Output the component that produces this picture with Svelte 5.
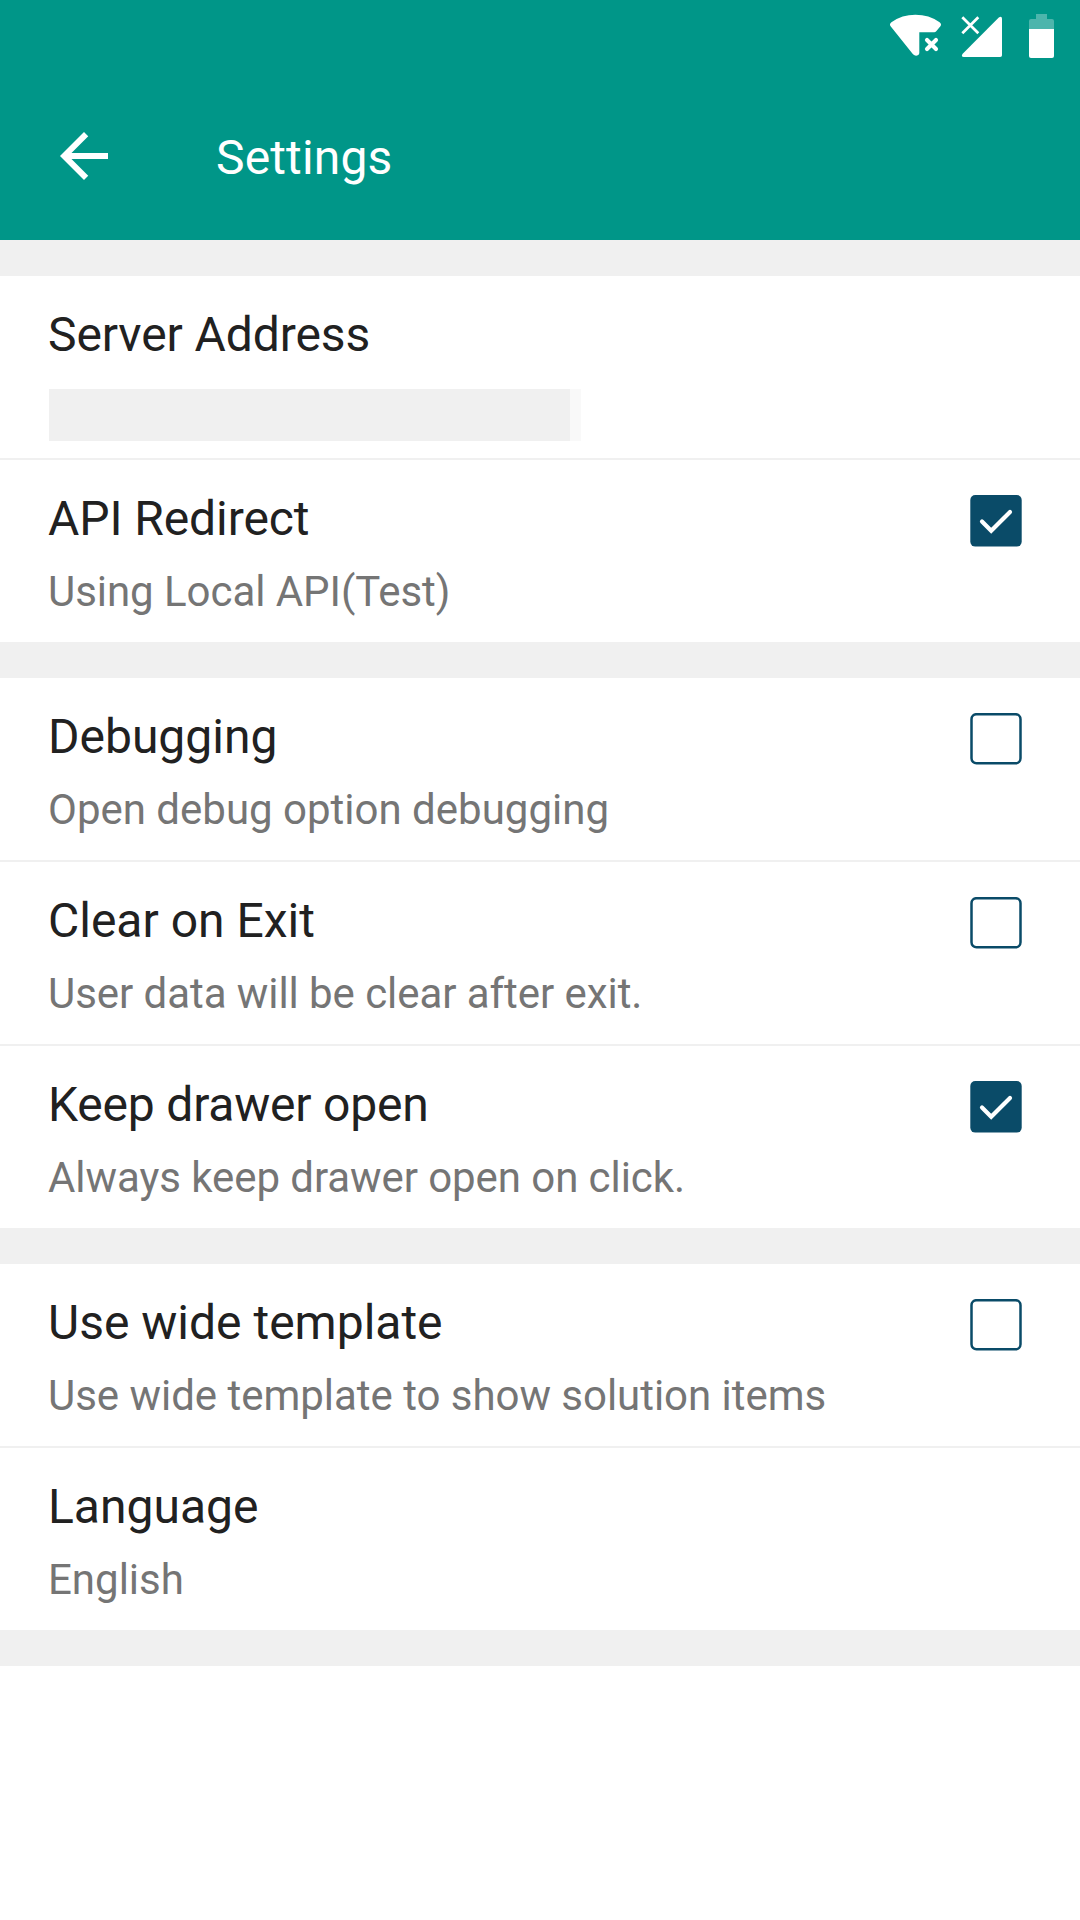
<script>
  // "fit" and "detailFit" are small tracking corrections, in pixels per letter.
  const groups = [
    [
      { title: 'Server Address', fit: -0.09, hidden: true },
      { title: 'API Redirect', fit: -0.08, detail: 'Using Local API(Test)', detailFit: -0.05, checked: true },
    ],
    [
      { title: 'Debugging', detail: 'Open debug option debugging', checked: false },
      { title: 'Clear on Exit', detail: 'User data will be clear after exit.', detailFit: -0.06, checked: false },
      { title: 'Keep drawer open', fit: -0.2, detail: 'Always keep drawer open on click.', detailFit: -0.07, checked: true },
    ],
    [
      { title: 'Use wide template', detail: 'Use wide template to show solution items', detailFit: -0.03, checked: false },
      { title: 'Language', detail: 'English' },
    ],
  ];
</script>

<div class="screen">
  <header>
    <div class="status">
      <svg width="210" height="72" viewBox="0 0 210 72" fill="#fff">
        <path d="M20.6 26.3Q19 24 21.4 22.2Q32 14.8 45.4 14.8Q59 14.8 69.6 22.2Q72 24 70.4 26.3L66 31.6Q65.3 32.3 64.3 32.3H49.3V53Q49.2 54.3 48.2 55Q45.5 56.6 43 54.3Z" />
        <path d="M57 40L66 49M66 40L57 49" fill="none" stroke="#fff" stroke-width="4.1" stroke-linecap="round" />
        <path d="M128.8 17.6Q131.8 15.6 132 18.8V55.2Q132 57 130.2 57H93.8Q90.6 56.7 92.7 53.7Z" />
        <path d="M92.3 17.3L108.3 33.3M108.3 17.3L92.3 33.3" fill="none" stroke="#fff" stroke-width="2.7" />
        <path d="M159 29V21Q159 19 161 19H166V14H177V19H182Q184 19 184 21V29Z" opacity=".3" />
        <path d="M159 29H184V56Q184 58 182 58H161Q159 58 159 56Z" />
      </svg>
    </div>
    <div class="toolbar">
      <svg width="72" height="72" viewBox="0 0 24 24">
        <path fill="#fff" d="M20 11H7.83l5.59-5.59L12 4l-8 8 8 8 1.41-1.41L7.83 13H20v-2z" />
      </svg>
      <h1>Settings</h1>
    </div>
  </header>

  <main>
    {#each groups as group}
      <section>
        {#each group as item}
          <div class="row">
            <div class="copy">
              <div class="title" style:letter-spacing="{item.fit ?? 0}px">{item.title}</div>
              {#if item.hidden}
                <div class="mask"></div>
              {:else}
                <div class="detail" style:letter-spacing="{item.detailFit ?? 0}px">{item.detail}</div>
              {/if}
            </div>
            {#if item.checked !== undefined}
              <svg class="check" width="52" height="52" viewBox="0 0 52 52">
                {#if item.checked}
                  <rect x=".3" y="0" width="51.4" height="51.6" rx="5" fill="#0a4b68" />
                  <path d="M12 26.5L21.2 35.7L40 16.9" fill="none" stroke="#fff" stroke-width="4.2" stroke-linecap="round" />
                {:else}
                  <rect x="1.5" y="1.2" width="49" height="49.1" rx="5" fill="none" stroke="#0a4b68" stroke-width="2.5" />
                {/if}
              </svg>
            {/if}
          </div>
        {/each}
      </section>
    {/each}
  </main>
</div>

<style>
  :global(body) {
    margin: 0;
    background: #fff;
  }
  .screen {
    width: 1080px;
    height: 1920px;
    overflow: hidden;
    background: #fff;
    font-family: Roboto, sans-serif;
  }
  header {
    height: 240px;
    background: #009688;
    color: #fff;
  }
  .status {
    display: flex;
    justify-content: flex-end;
    height: 72px;
  }
  .toolbar {
    display: flex;
    align-items: flex-start;
    box-sizing: border-box;
    height: 168px;
    padding: 48px 0 0 48px;
  }
  h1 {
    margin: 10px 0 0 96px;
    font-size: 48px;
    font-weight: 400;
    letter-spacing: 0.15px;
    line-height: 56px;
  }
  main {
    border-top: 36px solid #f0f0f0;
  }
  section {
    border-bottom: 36px solid #f0f0f0;
  }
  .row {
    display: flex;
    justify-content: space-between;
    box-sizing: border-box;
    height: 182px;
    padding: 31px 58px 0 48px;
  }
  .row + .row {
    height: 184px;
    border-top: 2px solid #f0f0f0;
  }
  .title {
    color: #212121;
    font-size: 48px;
    line-height: 56px;
    white-space: nowrap;
  }
  .detail {
    margin-top: 20px;
    color: #757575;
    font-size: 42px;
    line-height: 50px;
    white-space: nowrap;
  }
  .mask {
    box-sizing: border-box;
    width: 532px;
    height: 52px;
    margin: 26px 0 0 1px;
    border-right: 11px solid #f9f9f9;
    background: #f0f0f0;
  }
  .check {
    flex: none;
    margin-top: 4px;
  }
</style>
